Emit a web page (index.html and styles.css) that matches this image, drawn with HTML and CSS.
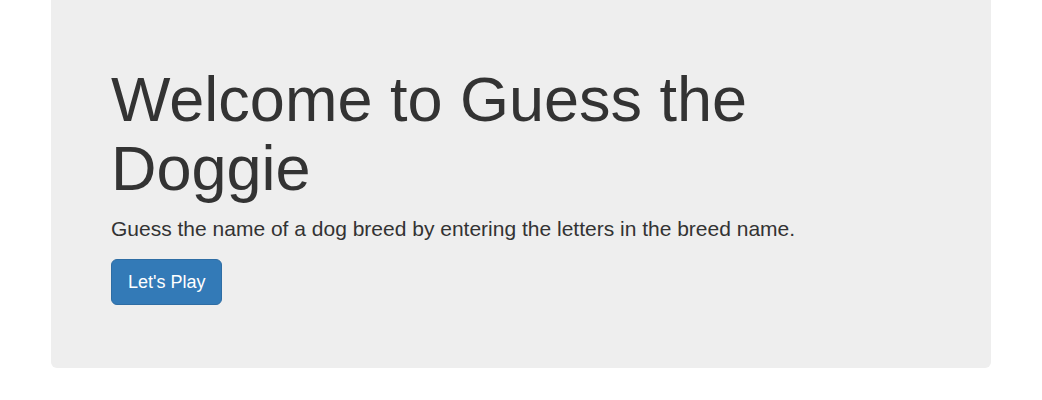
FILE: index.html
```html
<!DOCTYPE html>
<html>
<head>
<meta charset="utf-8">
<link rel="stylesheet" href="styles.css">
</head>
<body>
<div class="container">
  <div class="jumbotron">
    <h1 class="title">Welcome to Guess the Doggie</h1>
    <p class="lead">Guess the name of a dog breed by entering the letters in the breed name.</p>
    <p class="actions"><a class="btn" href="#">Let's Play</a></p>
  </div>
</div>
</body>
</html>
```

FILE: styles.css
```css
html, body {
  margin: 0;
  padding: 0;
}
body {
  font-family: "Liberation Sans", Arial, Helvetica, sans-serif;
  font-size: 14px;
  line-height: 1.42857143;
  color: #333;
  background: #fff;
}
.container {
  width: 970px;
  padding: 0 15px;
  margin: 0 auto;
  box-sizing: border-box;
}
.jumbotron {
  background: #eee;
  padding: 45px 60px 48px;
  border-radius: 0 0 6px 6px;
  margin-bottom: 30px;
}
.title {
  font-size: 63px;
  font-weight: 500;
  line-height: 1.1;
  margin: 20px 0 10px;
  color: inherit;
}
.lead {
  font-size: 21px;
  font-weight: 200;
  margin: 0 0 15px;
}
.actions {
  font-size: 21px;
  margin: 0 0 15px;
}
.btn {
  display: inline-block;
  padding: 10px 16px;
  font-size: 18px;
  line-height: 1.3333333;
  border-radius: 6px;
  color: #fff;
  background-color: #337ab7;
  border: 1px solid #2e6da4;
  text-decoration: none;
  vertical-align: middle;
}
```
